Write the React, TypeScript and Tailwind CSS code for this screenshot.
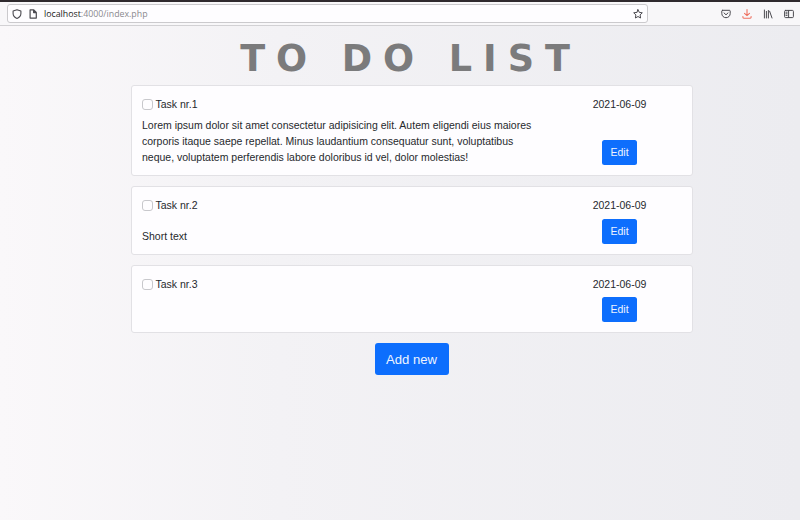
type Task = { title: string; text: string; date: string; card: string; body: string };

const tasks: Task[] = [
  {
    title: 'Task nr.1',
    text: 'Lorem ipsum dolor sit amet consectetur adipisicing elit. Autem eligendi eius maiores corporis itaque saepe repellat. Minus laudantium consequatur sunt, voluptatibus neque, voluptatem perferendis labore doloribus id vel, dolor molestias!',
    date: '2021-06-09',
    card: 'h-[91px] mb-[10px]',
    body: 'pt-[6px]',
  },
  { title: 'Task nr.2', text: 'Short text', date: '2021-06-09', card: 'h-[69px] mb-[10px]', body: 'pt-[16px]' },
  { title: 'Task nr.3', text: '', date: '2021-06-09', card: 'h-[68px]', body: '' },
];

const stroke = { fill: 'none', stroke: 'currentColor', strokeLinecap: 'round', strokeLinejoin: 'round' } as const;

function BrowserBar() {
  return (
    <header className="flex h-[26px] w-[800px] items-center border-t-2 border-b border-t-[#2f2a2e] border-b-[#d2d1d4] bg-[#f8f7f9] text-[#4b4a50]">
      <div className="ml-[7px] flex h-[19px] w-[641px] items-center rounded-[3px] border border-[#cbcacd] bg-[#fefdff] pr-1 pl-1">
        <svg className="h-[10px] w-[10px]" viewBox="0 0 10 10" strokeWidth="1.1" {...stroke}>
          <path d="M5 .7 8.9 2.1V4.6C8.9 6.9 7.4 8.6 5 9.4 2.6 8.6 1.1 6.9 1.1 4.6V2.1Z" />
        </svg>
        <svg className="ml-[6px] h-[10px] w-[10px]" viewBox="0 0 10 10" strokeWidth="1.2" {...stroke}>
          <path d="M2.1.9H5.8L8.3 3.4V9.1H2.1ZM5.6 1V3.6H8.2" />
        </svg>
        <span className="ml-[6px] pt-px text-[8.8px] leading-none whitespace-pre text-[#8a898e]">
          <span className="text-[#1d1c22]">localhost</span>:4000/index.php
        </span>
        <svg className="ml-auto h-[10px] w-[10px]" viewBox="0 0 10 10" strokeWidth="1" {...stroke}>
          <path d="M5 .7 6.3 3.4 9.3 3.8 7.1 5.9 7.6 9 5 7.5 2.4 9 2.9 5.9.7 3.8 3.7 3.4Z" />
        </svg>
      </div>
      <div className="ml-[73px] flex items-center gap-[11px]">
        <svg className="h-[10px] w-[10px]" viewBox="0 0 10 10" strokeWidth="1" {...stroke}>
          <path d="M1.6 1.3H8.4Q9.2 1.3 9.2 2.1V4.5C9.2 6.9 7.4 8.7 5 8.7S.8 6.9.8 4.5V2.1Q.8 1.3 1.6 1.3ZM3 3.9 5 5.8 7 3.9" />
        </svg>
        <svg className="h-[10px] w-[10px] text-[#ee7262]" viewBox="0 0 10 10" strokeWidth="1.1" {...stroke}>
          <path d="M5 .6V6.6M2.5 4.3 5 6.7 7.5 4.3M.9 7.5V8.3Q.9 9.2 1.8 9.2H8.2Q9.1 9.2 9.1 8.3V7.5" />
        </svg>
        <svg className="h-[10px] w-[10px]" viewBox="0 0 10 10" strokeWidth="1" {...stroke}>
          <path d="M1.4 1V9M3.4 2.4V9M5.4 1.5V9M6.6 2.2 9 9" />
        </svg>
        <svg className="h-[10px] w-[10px]" viewBox="0 0 10 10" strokeWidth="1" {...stroke}>
          <rect x=".6" y="1.4" width="8.8" height="7.2" rx="1" />
          <path d="M4.6 1.5V8.5M2 3.2H3.1M2 4.8H3.1M2 6.4H3.1" />
        </svg>
      </div>
    </header>
  );
}

function TaskCard({ task }: { task: Task }) {
  return (
    <article className={`flex rounded-[3px] border border-[#e2e1e5] bg-[#fefdff] px-[10px] pt-[10px] pb-[10px] ${task.card}`}>
      <div className="w-[400px]">
        <label className="flex h-4 items-center leading-4">
          <input type="checkbox" className="mr-[2.5px] h-[11px] w-[11px] appearance-none rounded-[3px] border border-[#c8c8cc] bg-[#fefdff]" />
          {task.title}
        </label>
        <p className={`leading-[15.75px] ${task.body}`}>{task.text}</p>
      </div>
      <div className="ml-[37.5px] flex w-[80px] flex-col items-center justify-between">
        <time className="leading-4">{task.date}</time>
        <button className="h-[25px] w-[35px] shrink-0 rounded-[2.5px] bg-[#0d6efd] text-[#eef4ff]">Edit</button>
      </div>
    </article>
  );
}

export default function App() {
  return (
    <div className="h-[520px] w-[800px] overflow-hidden bg-linear-to-r from-[#faf8fa] via-[#f3f2f5] via-35% to-[#ececf0] font-['Open_Sans',sans-serif]">
      <BrowserBar />
      <main className="flex w-[824px] flex-col items-center font-['Liberation_Sans',Arial,sans-serif] text-[10.5px] text-[#26292d]">
        <h1 className="mr-[3px] h-[59px] pt-[11px] font-['DejaVu_Sans',sans-serif] text-[36.6px] leading-[44px] font-bold tracking-[10.95px] whitespace-nowrap text-[#7b7b7c]">
          TO DO LIST
        </h1>
        <section className="w-[562px]">
          {tasks.map((task) => (
            <TaskCard key={task.title} task={task} />
          ))}
        </section>
        <button className="mt-[10px] mr-px h-8 w-[74px] rounded-[3px] bg-[#0d6efd] pt-px text-[13.1px] text-[#eef4ff]">Add new</button>
      </main>
    </div>
  );
}
